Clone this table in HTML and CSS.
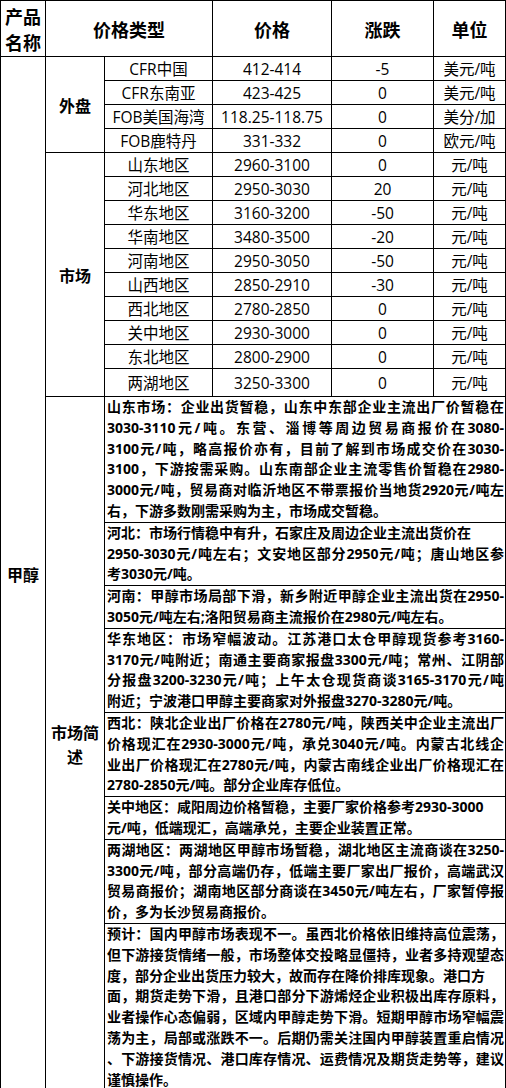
FILE: index.html
```html
<!DOCTYPE html>
<html lang="zh-CN">
<head>
<meta charset="utf-8">
<title>甲醇价格</title>
<link rel="stylesheet" href="styles.css">
</head>
<body>
<table class="sheet">
  <colgroup>
    <col class="c1"><col class="c2"><col class="c3"><col class="c4"><col class="c5"><col class="c6">
  </colgroup>
  <thead>
    <tr class="hdr">
      <th class="prod-h">产品名称</th>
      <th colspan="2">价格类型</th>
      <th>价格</th>
      <th>涨跌</th>
      <th>单位</th>
    </tr>
  </thead>
  <tbody>
    <tr class="r">
      <td rowspan="22" class="label">甲醇</td>
      <td rowspan="4" class="label">外盘</td>
      <td>CFR中国</td><td>412-414</td><td>-5</td><td>美元/吨</td>
    </tr>
    <tr class="r"><td>CFR东南亚</td><td>423-425</td><td>0</td><td>美元/吨</td></tr>
    <tr class="r"><td>FOB美国海湾</td><td>118.25-118.75</td><td>0</td><td>美分/加</td></tr>
    <tr class="r"><td>FOB鹿特丹</td><td>331-332</td><td>0</td><td>欧元/吨</td></tr>
    <tr class="r">
      <td rowspan="10" class="label">市场</td>
      <td>山东地区</td><td>2960-3100</td><td>0</td><td>元/吨</td>
    </tr>
    <tr class="r"><td>河北地区</td><td>2950-3030</td><td>20</td><td>元/吨</td></tr>
    <tr class="r"><td>华东地区</td><td>3160-3200</td><td>-50</td><td>元/吨</td></tr>
    <tr class="r"><td>华南地区</td><td>3480-3500</td><td>-20</td><td>元/吨</td></tr>
    <tr class="r"><td>河南地区</td><td>2950-3050</td><td>-50</td><td>元/吨</td></tr>
    <tr class="r"><td>山西地区</td><td>2850-2910</td><td>-30</td><td>元/吨</td></tr>
    <tr class="r"><td>西北地区</td><td>2780-2850</td><td>0</td><td>元/吨</td></tr>
    <tr class="r"><td>关中地区</td><td>2930-3000</td><td>0</td><td>元/吨</td></tr>
    <tr class="r"><td>东北地区</td><td>2800-2900</td><td>0</td><td>元/吨</td></tr>
    <tr class="r r-tall"><td>两湖地区</td><td>3250-3300</td><td>0</td><td>元/吨</td></tr>
    <tr>
      <td rowspan="8" class="label">市场简述</td>
      <td colspan="4" class="note">
        <span class="ln">山东市场：企业出货暂稳，山东中东部企业主流出厂价暂稳在</span>
        <span class="ln">3030-3110元/吨。东营、淄博等周边贸易商报价在3080-</span>
        <span class="ln">3100元/吨，略高报价亦有，目前了解到市场成交价在3030-</span>
        <span class="ln">3100，下游按需采购。山东南部企业主流零售价暂稳在2980-</span>
        <span class="ln">3000元/吨，贸易商对临沂地区不带票报价当地货2920元/吨左</span>
        <span class="ln end">右，下游多数刚需采购为主，市场成交暂稳。</span>
      </td>
    </tr>
    <tr>
      <td colspan="4" class="note">
        <span class="ln end">河北：市场行情稳中有升，石家庄及周边企业主流出货价在</span>
        <span class="ln">2950-3030元/吨左右；文安地区部分2950元/吨；唐山地区参</span>
        <span class="ln end">考3030元/吨。</span>
      </td>
    </tr>
    <tr>
      <td colspan="4" class="note">
        <span class="ln">河南：甲醇市场局部下滑，新乡附近甲醇企业主流出货在2950-</span>
        <span class="ln end">3050元/吨左右;洛阳贸易商主流报价在2980元/吨左右。</span>
      </td>
    </tr>
    <tr>
      <td colspan="4" class="note">
        <span class="ln">华东地区：市场窄幅波动。江苏港口太仓甲醇现货参考3160-</span>
        <span class="ln">3170元/吨附近；南通主要商家报盘3300元/吨；常州、江阴部</span>
        <span class="ln">分报盘3200-3230元/吨；上午太仓现货商谈3165-3170元/吨</span>
        <span class="ln end">附近；宁波港口甲醇主要商家对外报盘3270-3280元/吨。</span>
      </td>
    </tr>
    <tr>
      <td colspan="4" class="note">
        <span class="ln">西北：陕北企业出厂价格在2780元/吨，陕西关中企业主流出厂</span>
        <span class="ln">价格现汇在2930-3000元/吨，承兑3040元/吨。内蒙古北线企</span>
        <span class="ln">业出厂价格现汇在2780元/吨，内蒙古南线企业出厂价格现汇在</span>
        <span class="ln end">2780-2850元/吨。部分企业库存低位。</span>
      </td>
    </tr>
    <tr>
      <td colspan="4" class="note">
        <span class="ln end">关中地区：咸阳周边价格暂稳，主要厂家价格参考2930-3000</span>
        <span class="ln end">元/吨，低端现汇，高端承兑，主要企业装置正常。</span>
      </td>
    </tr>
    <tr>
      <td colspan="4" class="note">
        <span class="ln">两湖地区：两湖地区甲醇市场暂稳，湖北地区主流商谈在3250-</span>
        <span class="ln">3300元/吨，部分高端仍存，低端主要厂家出厂报价，高端武汉</span>
        <span class="ln">贸易商报价；湖南地区部分商谈在3450元/吨左右，厂家暂停报</span>
        <span class="ln end">价，多为长沙贸易商报价。</span>
      </td>
    </tr>
    <tr>
      <td colspan="4" class="note">
        <span class="ln">预计：国内甲醇市场表现不一。虽西北价格依旧维持高位震荡，</span>
        <span class="ln">但下游接货情绪一般，市场整体交投略显僵持，业者多持观望态</span>
        <span class="ln end">度，部分企业出货压力较大，故而存在降价排库现象。港口方</span>
        <span class="ln">面，期货走势下滑，且港口部分下游烯烃企业积极出库存原料，</span>
        <span class="ln">业者操作心态偏弱，区域内甲醇走势下滑。短期甲醇市场窄幅震</span>
        <span class="ln">荡为主，局部或涨跌不一。后期仍需关注国内甲醇装置重启情况</span>
        <span class="ln">、下游接货情况、港口库存情况、运费情况及期货走势等，建议</span>
        <span class="ln end">谨慎操作。</span>
      </td>
    </tr>
  </tbody>
</table>
</body>
</html>
```
FILE: styles.css
```css
html, body {
  margin: 0;
  padding: 0;
  background: #fff;
}

body {
  font-family: "Open Sans", "Noto Sans CJK SC", sans-serif;
  color: #000;
}

.sheet {
  width: 505px;
  border-collapse: collapse;
  table-layout: fixed;
}

.c1 { width: 45px; }
.c2 { width: 59px; }
.c3 { width: 108px; }
.c4 { width: 119px; }
.c5 { width: 102px; }
.c6 { width: 72px; }

.sheet th,
.sheet td {
  border: 1px solid #000;
  padding: 0;
  text-align: center;
  vertical-align: middle;
}

.sheet td {
  font-size: 15.5px;
  line-height: 20px;
  white-space: nowrap;
}

.hdr {
  height: 56px;
}

.sheet th {
  font-family: "Noto Sans CJK SC", sans-serif;
  font-weight: 700;
  font-size: 18px;
  line-height: 26px;
}

.r {
  height: 24px;
}

.r-tall {
  height: 28px;
}

.sheet td.label {
  font-family: "Noto Sans CJK SC", sans-serif;
  font-weight: 700;
  font-size: 16px;
  line-height: 24px;
  white-space: normal;
}

.sheet td.note {
  text-align: left;
  white-space: normal;
  font-weight: 700;
  font-size: 14px;
  line-height: 20.8px;
  padding: 0 1px 0 2px;
}

.ln {
  display: block;
  text-align: justify;
  text-align-last: justify;
}

.ln.end {
  text-align: left;
  text-align-last: left;
}
```
